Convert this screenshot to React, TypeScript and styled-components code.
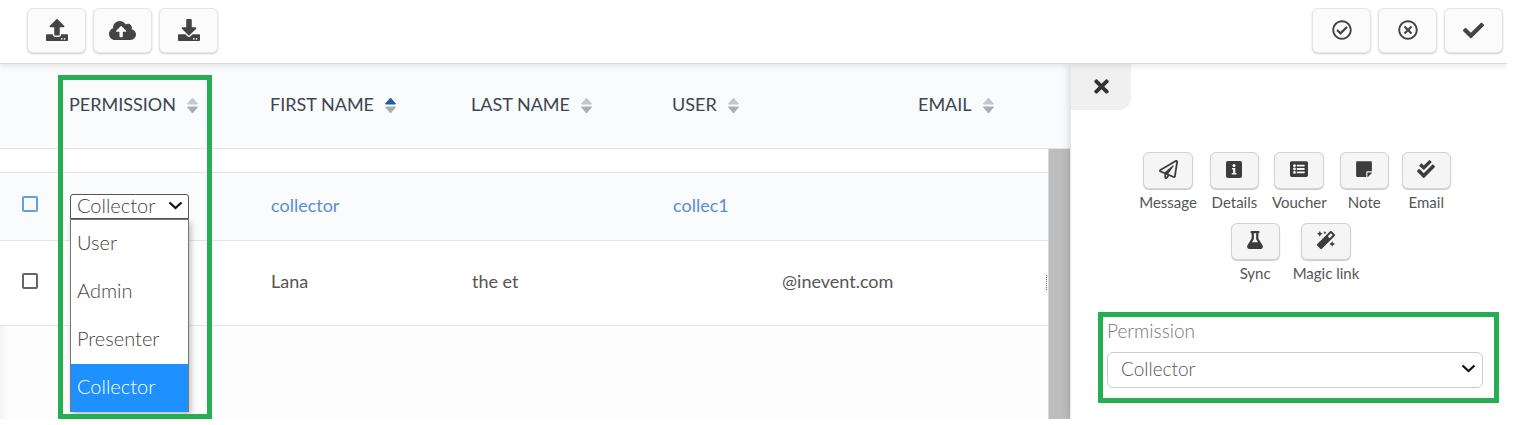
import React from 'react';
import styled, { createGlobalStyle } from 'styled-components';
import {
  FaCheck,
  FaCheckDouble,
  FaCloudUploadAlt,
  FaDownload,
  FaFlask,
  FaListAlt,
  FaMagic,
  FaRegCheckCircle,
  FaRegPaperPlane,
  FaRegTimesCircle,
  FaStickyNote,
  FaTimes,
  FaUpload,
} from 'react-icons/fa';

const GlobalStyle = createGlobalStyle`
  html, body {
    margin: 0;
    padding: 0;
    background: #fff;
  }
  body {
    font-family: Lato, "Liberation Sans", sans-serif;
    color: #444;
  }
`;

const Page = styled.div`
  position: relative;
  width: 1507px;
  height: 419px;
  overflow: hidden;
  background: #fff;
`;

const Toolbar = styled.div`
  position: relative;
  z-index: 3;
  display: flex;
  justify-content: space-between;
  box-sizing: border-box;
  height: 64px;
  padding: 8px 4px 0 27px;
  background: #fff;
  border-bottom: 1px solid #dcdcdc;
  box-shadow: 0 2px 6px rgba(0, 0, 0, 0.1);
`;

const ButtonGroup = styled.div`
  display: flex;
  gap: 7px;
`;

const ToolButton = styled.button`
  display: flex;
  align-items: center;
  justify-content: center;
  width: 59px;
  height: 45px;
  padding: 0 0 1px;
  color: #444;
  background: #fbfbfb;
  border: 1px solid #e6e6e6;
  border-radius: 6px;
  box-shadow: 0 1px 2px rgba(0, 0, 0, 0.2);
`;

const Content = styled.div`
  display: flex;
  height: 355px;
`;

const TableArea = styled.div`
  width: 1070px;
  flex: none;
  display: flex;
  flex-direction: column;
  background: #fdfdfd;
  box-shadow: inset 12px 0 12px -12px rgba(0, 0, 0, 0.08);
`;

const HeadRow = styled.div`
  display: grid;
  grid-template-columns: 69px 201px 201px 201px 246px 1fr;
  align-items: center;
  height: 84px;
  flex: none;
  background: #f9fbfd;
  border-bottom: 1px solid #e2e5e8;
`;

const HeadCell = styled.div<{ $col: number }>`
  grid-column: ${(p) => p.$col};
  display: flex;
  align-items: center;
  gap: 11px;
  padding-bottom: 2px;
  font-size: 18px;
  color: #3c4650;
  text-transform: uppercase;
`;

const HeadLabel = styled.span`
  margin-top: -2px;
`;

const TableBody = styled.div`
  flex: 1;
  display: flex;
  min-height: 0;
`;

const Rows = styled.div`
  width: 1048px;
  flex: none;
`;

const Scrollbar = styled.div`
  flex: 1;
  background: #bdbdbd;
  border-left: 1px solid #d8d8d8;
`;

const Spacer = styled.div`
  height: 23px;
  background: #fff;
  border-bottom: 1px solid #e2e5e8;
`;

const Row = styled.div<{ $height: number; $shaded?: boolean }>`
  position: relative;
  display: grid;
  grid-template-columns: 70px 201px 201px 201px 109px 1fr;
  align-items: center;
  height: ${(p) => p.$height}px;
  font-size: 18px;
  color: #555;
  background: ${(p) => (p.$shaded ? '#f9fbfd' : '#fff')};
  border-bottom: 1px solid #e2e5e8;
`;

const CheckCell = styled.div`
  padding: 0 0 5px 22px;
`;

const CheckBox = styled.span<{ $active?: boolean }>`
  display: block;
  box-sizing: border-box;
  width: 16px;
  height: 16px;
  border: 2px solid ${(p) => (p.$active ? '#629fdc' : '#666')};
  border-radius: 2px;
`;

const Cell = styled.div<{ $col: number }>`
  grid-column: ${(p) => p.$col};
  grid-row: 1;
  padding-bottom: 4px;
`;

const UserLink = styled.span`
  color: #5b8dd0;
`;

const SelectCell = styled.div`
  position: relative;
  grid-column: 2;
  grid-row: 1;
`;

const InlineSelect = styled.div`
  display: flex;
  align-items: center;
  justify-content: space-between;
  box-sizing: border-box;
  width: 119px;
  height: 25px;
  padding: 0 5px 3px 6px;
  font-size: 20px;
  font-weight: 300;
  color: #444;
  background: #fff;
  border: 1px solid #555;
  border-radius: 3px 3px 0 0;
`;

const OptionList = styled.div`
  position: absolute;
  z-index: 2;
  top: 25px;
  left: 0;
  box-sizing: border-box;
  width: 119px;
  background: #fff;
  border: 1px solid #777;
  border-bottom: 0;
  box-shadow: 2px 3px 6px rgba(0, 0, 0, 0.25);
`;

const Option = styled.div<{ $selected?: boolean }>`
  display: flex;
  align-items: center;
  box-sizing: border-box;
  height: 48px;
  padding: 0 0 4px 6px;
  font-size: 20px;
  font-weight: 300;
  color: ${(p) => (p.$selected ? '#fff' : '#444')};
  background: ${(p) => (p.$selected ? '#1e90ff' : '#fff')};
`;

const RowMenu = styled.span`
  position: absolute;
  top: 34px;
  right: 1px;
  height: 15px;
  border-left: 1px dotted #666;
`;

const SidePanel = styled.div`
  position: relative;
  z-index: 2;
  flex: 1;
  box-sizing: border-box;
  margin-left: 1px;
  padding: 0 24px 0 36px;
  background: #fff;
  box-shadow: -3px 0 6px rgba(0, 0, 0, 0.12);
`;

const CloseTab = styled.div`
  display: flex;
  align-items: center;
  justify-content: center;
  width: 60px;
  height: 46px;
  margin-left: -36px;
  padding-bottom: 2px;
  box-sizing: border-box;
  color: #333;
  background: #f0f0f0;
  border-bottom-right-radius: 12px;
`;

const Actions = styled.div`
  display: flex;
  flex-direction: column;
  gap: 12px;
  margin-top: 42px;
`;

const ActionRow = styled.div`
  display: flex;
  justify-content: center;
  gap: 13px;
`;

const Action = styled.div`
  display: flex;
  flex-direction: column;
  align-items: center;
  gap: 4px;
  font-size: 15px;
  color: #555;
`;

const ActionButton = styled.button<{ $wide?: boolean }>`
  display: flex;
  align-items: center;
  justify-content: center;
  box-sizing: border-box;
  width: ${(p) => (p.$wide ? 50 : 49)}px;
  height: 37px;
  padding: 0 0 3px;
  color: #3c3c3c;
  background: #f5f5f5;
  border: 1px solid #d2d2d2;
  border-radius: 6px;
  box-shadow: 0 1px 1px rgba(0, 0, 0, 0.2);
`;

const FieldLabel = styled.div`
  margin-top: 37px;
  font-size: 19px;
  font-weight: 300;
  color: #777;
`;

const PanelSelect = styled.div`
  display: flex;
  align-items: center;
  justify-content: space-between;
  box-sizing: border-box;
  height: 36px;
  margin-top: 10px;
  padding: 0 6px 3px 13px;
  font-size: 19px;
  font-weight: 300;
  color: #555;
  background: #fff;
  border: 1px solid #ccc;
  border-radius: 6px;
`;

const Highlight = styled.div<{ $x: number; $y: number; $w: number; $h: number }>`
  position: absolute;
  z-index: 5;
  box-sizing: border-box;
  left: ${(p) => p.$x}px;
  top: ${(p) => p.$y}px;
  width: ${(p) => p.$w}px;
  height: ${(p) => p.$h}px;
  border: 5px solid #27ae52;
  pointer-events: none;
`;

const Chevron = () => (
  <svg width="15" height="9" viewBox="0 0 15 9">
    <path d="M1.5 1.5 L7.5 7 L13.5 1.5" fill="none" stroke="#111" strokeWidth="2.2" />
  </svg>
);

const SortArrows = ({ active }: { active?: boolean }) => (
  <svg width="11" height="17" viewBox="0 0 11 17">
    <path d="M5.5 1 L10.5 7 H0.5 Z" fill={active ? '#1f5f9e' : '#c3c7cb'} stroke={active ? '#1f5f9e' : '#c3c7cb'} strokeLinejoin="round" />
    <path d="M0.5 10 H10.5 L5.5 16 Z" fill="#a9aeb3" stroke="#a9aeb3" strokeLinejoin="round" />
  </svg>
);

const InfoSquare = () => (
  <svg width="16" height="17" viewBox="0 0 16 17">
    <rect x="0" y="0" width="16" height="17" rx="2" fill="#3c3c3c" />
    <circle cx="8" cy="4.5" r="1.5" fill="#f5f5f5" />
    <path d="M6 7 H9.3 V12 H10.5 V13.5 H5.8 V12 H7.1 V8.5 H6 Z" fill="#f5f5f5" />
  </svg>
);

const columns = [
  { title: 'Permission', col: 2 },
  { title: 'First name', col: 3, active: true },
  { title: 'Last name', col: 4 },
  { title: 'User', col: 5 },
  { title: 'Email', col: 6 },
];

const actionRows = [
  [
    { label: 'Message', icon: <FaRegPaperPlane size={19} />, wide: true },
    { label: 'Details', icon: <InfoSquare /> },
    { label: 'Voucher', icon: <FaListAlt size={18} />, wide: true },
    { label: 'Note', icon: <FaStickyNote size={18} /> },
    { label: 'Email', icon: <FaCheckDouble size={18} /> },
  ],
  [
    { label: 'Sync', icon: <FaFlask size={18} /> },
    { label: 'Magic link', icon: <FaMagic size={18} />, wide: true },
  ],
];

export default function App() {
  return (
    <Page>
      <GlobalStyle />
      <Toolbar>
        <ButtonGroup>
          <ToolButton><FaUpload size={22} /></ToolButton>
          <ToolButton><FaCloudUploadAlt size={27} /></ToolButton>
          <ToolButton><FaDownload size={22} /></ToolButton>
        </ButtonGroup>
        <ButtonGroup>
          <ToolButton><FaRegCheckCircle size={20} /></ToolButton>
          <ToolButton><FaRegTimesCircle size={20} /></ToolButton>
          <ToolButton><FaCheck size={21} /></ToolButton>
        </ButtonGroup>
      </Toolbar>
      <Content>
        <TableArea>
          <HeadRow>
            {columns.map((c) => (
              <HeadCell key={c.title} $col={c.col}>
                <HeadLabel>{c.title}</HeadLabel>
                <SortArrows active={c.active} />
              </HeadCell>
            ))}
          </HeadRow>
          <TableBody>
            <Rows>
              <Spacer />
              <Row $height={67} $shaded>
                <CheckCell><CheckBox $active /></CheckCell>
                <SelectCell>
                  <InlineSelect>
                    Collector
                    <Chevron />
                  </InlineSelect>
                  <OptionList>
                    <Option>User</Option>
                    <Option>Admin</Option>
                    <Option>Presenter</Option>
                    <Option $selected>Collector</Option>
                  </OptionList>
                </SelectCell>
                <Cell $col={3}><UserLink>collector</UserLink></Cell>
                <Cell $col={5}><UserLink>collec1</UserLink></Cell>
              </Row>
              <Row $height={84}>
                <CheckCell><CheckBox /></CheckCell>
                <Cell $col={3}>Lana</Cell>
                <Cell $col={4}>the et</Cell>
                <Cell $col={6}>@inevent.com</Cell>
                <RowMenu />
              </Row>
            </Rows>
            <Scrollbar />
          </TableBody>
        </TableArea>
        <SidePanel>
          <CloseTab><FaTimes size={21} /></CloseTab>
          <Actions>
            {actionRows.map((row) => (
              <ActionRow key={row[0].label}>
                {row.map((a) => (
                  <Action key={a.label}>
                    <ActionButton $wide={a.wide}>{a.icon}</ActionButton>
                    {a.label}
                  </Action>
                ))}
              </ActionRow>
            ))}
          </Actions>
          <FieldLabel>Permission</FieldLabel>
          <PanelSelect>
            Collector
            <Chevron />
          </PanelSelect>
        </SidePanel>
      </Content>
      <Highlight $x={58} $y={75} $w={154} $h={344} />
      <Highlight $x={1098} $y={312} $w={401} $h={91} />
    </Page>
  );
}
